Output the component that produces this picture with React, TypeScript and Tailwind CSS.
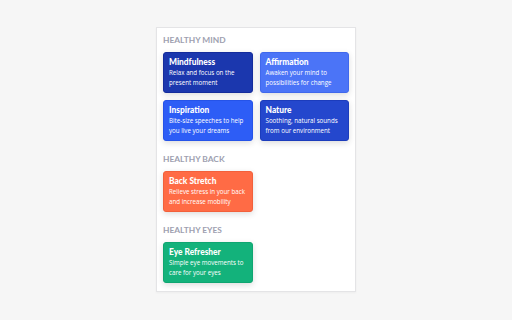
import React from "react";

type Exercise = {
  title: string;
  desc: string[];
  className: string;
};

const sections: { heading: string; items: Exercise[] }[] = [
  {
    heading: "Healthy Mind",
    items: [
      {
        title: "Mindfulness",
        desc: ["Relax and focus on the", "present moment"],
        className: "bg-[#1b37ae] border-[#142c9c]",
      },
      {
        title: "Affirmation",
        desc: ["Awaken your mind to", "possibilities for change"],
        className: "bg-[#4b74f7] border-[#4068ec]",
      },
      {
        title: "Inspiration",
        desc: ["Bite-size speeches to help", "you live your dreams"],
        className: "bg-[#2d5df6] border-[#2553e8]",
      },
      {
        title: "Nature",
        desc: ["Soothing, natural sounds", "from our environment"],
        className: "bg-[#2447cd] border-[#1c3cbc]",
      },
    ],
  },
  {
    heading: "Healthy Back",
    items: [
      {
        title: "Back Stretch",
        desc: ["Relieve stress in your back", "and increase mobility"],
        className: "bg-[#ff6b45] border-[#f2603b]",
      },
    ],
  },
  {
    heading: "Healthy Eyes",
    items: [
      {
        title: "Eye Refresher",
        desc: ["Simple eye movements to", "care for your eyes"],
        className: "bg-[#13b27b] border-[#0fa671]",
      },
    ],
  },
];

function Card({ item }: { item: Exercise }) {
  return (
    <div
      className={`h-[41px] overflow-hidden rounded-[3px] border px-[5px] pt-[3px] text-white shadow-[0_2px_6px_rgba(0,0,0,0.14)] ${item.className}`}
    >
      <div className="text-[8.4px] font-black leading-[12px]">{item.title}</div>
      <div className="whitespace-nowrap font-['Open_Sans',sans-serif] text-[6.2px] leading-[9.5px]">
        {item.desc.map((line) => (
          <div key={line}>{line}</div>
        ))}
      </div>
    </div>
  );
}

export default function App() {
  return (
    <div
      className="flex h-[320px] w-[512px] justify-center bg-[#f6f6f6] pt-[27px]"
      style={{ fontFamily: "Lato, 'Noto Sans', sans-serif" }}
    >
      <div className="h-[265px] w-[200px] border border-[#e4e4e6] bg-white px-[6px] pt-[6px] shadow-[0_1px_2px_rgba(0,0,0,0.04)]">
        {sections.map((section, i) => (
          <div key={section.heading} className={i > 0 ? "mt-[12px]" : ""}>
            <div className="mb-[5px] h-[13px] text-[8.4px] font-bold uppercase leading-[13px] text-[#9e9fb0]">
              {section.heading}
            </div>
            <div className="grid grid-cols-2 gap-[7px]">
              {section.items.map((item) => (
                <Card key={item.title} item={item} />
              ))}
            </div>
          </div>
        ))}
      </div>
    </div>
  );
}
